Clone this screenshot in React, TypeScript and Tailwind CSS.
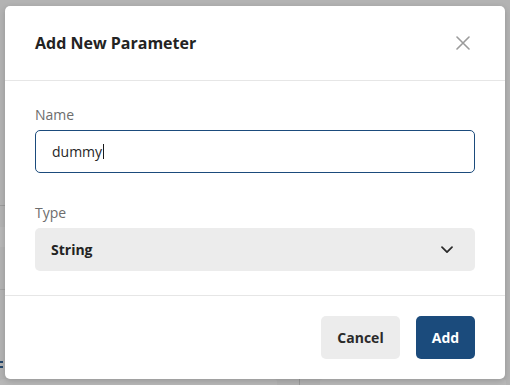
import React from "react";

export default function App() {
  return (
    <div className="relative w-[510px] h-[385px] overflow-hidden bg-[#b3b3b3] font-['Open_Sans',sans-serif]">
      {/* faint underlying page behind the backdrop */}
      <div className="absolute left-0 top-[205px] w-[6px] h-px bg-[#9c9c9c]" />
      <div className="absolute left-0 top-[227px] w-[6px] h-[20px] bg-[#b8b8b8]" />
      <div className="absolute left-0 top-[289px] w-[6px] h-px bg-[#a3a3a3]" />
      <div className="absolute left-0 top-[361px] w-[3px] h-[2px] bg-[#23466b]" />
      <div className="absolute left-0 top-[366px] w-[3px] h-[2px] bg-[#23466b]" />
      <div className="absolute left-[299px] top-[370px] w-px h-[15px] bg-[#9a9a9a]" />
      <div className="absolute left-[320px] top-[379px] w-[186px] h-[8px] rounded-[3px] bg-[#b9b9b9]" />
      <div className="absolute left-0 top-[379px] w-[277px] h-[8px] rounded-[3px] bg-[#b8b8b8]" />

      <div className="relative pl-[5px] pt-[6px]">
        <div className="flex w-[500px] h-[373px] flex-col rounded-[5px] bg-white shadow-[0_2px_6px_rgba(0,0,0,0.18)]">
          <div className="flex h-[75px] items-center justify-between border-b border-[#e6e6e6] pl-[30px] pr-[35px]">
            <div className="text-[16px] font-bold leading-[22px] text-[#232323]">Add New Parameter</div>
            <svg width="14" height="14" viewBox="0 0 14 14" fill="none">
              <path d="M1 1L13 13M13 1L1 13" stroke="#9b9b9b" strokeWidth="1.6" strokeLinecap="round" />
            </svg>
          </div>

          <div className="flex flex-col px-[30px] pt-[24px] pb-[24px]">
            <div className="mb-[5px] text-[14px] leading-[20px] text-[#6d6d6d]">Name</div>
            <div className="flex h-[43px] items-center rounded-[5px] border border-[#1b4b7c] pl-[16px]">
              <span className="text-[14px] leading-[20px] text-[#262626]">dummy</span>
              <span className="ml-px h-[15px] w-px bg-[#1a1a1a]" />
            </div>

            <div className="mt-[30px] mb-[5px] text-[14px] leading-[20px] text-[#6d6d6d]">Type</div>
            <div className="flex h-[43px] items-center justify-between rounded-[5px] bg-[#ececec] pl-[16px] pr-[22px]">
              <span className="text-[14px] font-bold leading-[20px] text-[#232323]">String</span>
              <svg width="12" height="8" viewBox="0 0 12 8" fill="none">
                <path d="M1 1.2L6 6.2L11 1.2" stroke="#2a2a2a" strokeWidth="1.7" strokeLinecap="round" strokeLinejoin="round" />
              </svg>
            </div>
          </div>

          <div className="flex justify-end gap-[16px] border-t border-[#e6e6e6] px-[30px] py-[20px]">
            <div className="flex h-[43px] w-[79px] items-center justify-center rounded-[5px] bg-[#ececec] text-[14px] font-bold text-[#2a2a2a]">
              Cancel
            </div>
            <div className="flex h-[43px] w-[59px] items-center justify-center rounded-[5px] bg-[#1b4b7c] text-[14px] font-bold text-white">
              Add
            </div>
          </div>
        </div>
      </div>
    </div>
  );
}
